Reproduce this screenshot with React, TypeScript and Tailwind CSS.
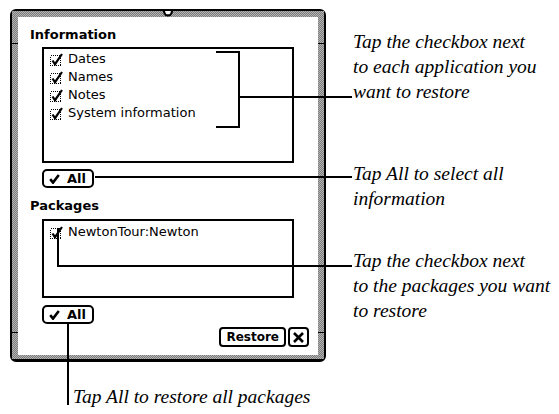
import React from "react";

const ui = { fontFamily: '"DejaVu Sans", Verdana, sans-serif' };
const serif = { fontFamily: '"Liberation Serif", "Times New Roman", serif' };

function CheckBox() {
  return (
    <svg width="15" height="15" viewBox="0 0 15 15" className="shrink-0" shapeRendering="crispEdges">
      <rect x="0.5" y="3.5" width="10" height="10" fill="none" stroke="#000" strokeWidth="1" strokeDasharray="1 1" />
      <path d="M2.5 8.5 L5 12.2 L12 2" fill="none" stroke="#000" strokeWidth="2.2" shapeRendering="auto" />
    </svg>
  );
}

function Row({ label }: { label: string }) {
  return (
    <div className="flex h-[18px] items-center gap-[3px] text-[13px] leading-[18px] text-black">
      <CheckBox />
      <span>{label}</span>
    </div>
  );
}

function AllButton() {
  return (
    <div className="flex h-[19px] w-[52px] items-center gap-[7px] rounded-[5px] border-2 border-black bg-white pl-[5px] text-[13px] font-bold leading-none">
      <svg width="11" height="10" viewBox="0 0 11 10">
        <path d="M1.2 5.2 L4 8.6 L9.8 1" fill="none" stroke="#000" strokeWidth="2.6" />
      </svg>
      <span>All</span>
    </div>
  );
}

export default function App() {
  return (
    <div className="relative h-[414px] w-[559px] overflow-hidden bg-white text-black">
      <div className="flex">
        {/* Newton slip */}
        <div
          className="relative ml-[10px] mt-[9px] h-[353px] w-[316px] shrink-0 rounded-[6px] border-2 border-b-[3px] border-black bg-[#999999] p-[6px] pb-[4px]"
          style={ui}
        >
          {/* dithered gray band */}
          <svg className="absolute inset-0 h-full w-full" shapeRendering="crispEdges">
            <defs>
              <pattern id="dither" width="2" height="2" patternUnits="userSpaceOnUse">
                <rect width="2" height="2" fill="#b4b4b4" />
                <rect width="1" height="1" fill="#7c7c7c" />
                <rect x="1" y="1" width="1" height="1" fill="#7c7c7c" />
              </pattern>
            </defs>
            <rect width="100%" height="100%" fill="url(#dither)" />
          </svg>
          <svg
            className="absolute left-1/2 top-[-2px] z-20 -translate-x-1/2"
            width="12"
            height="8"
            viewBox="0 0 12 8"
          >
            <path d="M0 0 H12 L10.2 5 Q9 7.5 6 7.5 Q3 7.5 1.8 5 Z" fill="#000" />
            <path d="M3 2 H9 L8.2 4.4 Q7.6 5.3 6 5.3 Q4.4 5.3 3.8 4.4 Z" fill="#fff" />
          </svg>
          <div className="relative flex h-full flex-col bg-white pb-[8px] pl-[12px] pr-[9px] pt-[10px]">
            <div className="text-[13px] font-bold leading-[16px]">Information</div>
            <div className="ml-[12px] mt-[4px] h-[116px] w-[252px] border-2 border-black pl-[6px] pt-[1px]">
              <Row label="Dates" />
              <Row label="Names" />
              <Row label="Notes" />
              <Row label="System information" />
            </div>
            <div className="ml-[12px] mt-[6px]">
              <AllButton />
            </div>
            <div className="mt-[10px] text-[13px] font-bold leading-[16px]">Packages</div>
            <div className="ml-[12px] mt-[5px] h-[79px] w-[252px] border-2 border-black pl-[6px] pt-[2px]">
              <Row label="NewtonTour:Newton" />
            </div>
            <div className="ml-[12px] mt-[7px] flex h-[42px] items-start justify-between">
              <AllButton />
              <div className="flex gap-[2px] self-end">
                <div className="flex h-[20px] items-center rounded-[4px] border-2 border-black px-[5px] text-[12px] font-bold leading-none">
                  Restore
                </div>
                <div className="flex h-[20px] w-[21px] items-center justify-center rounded-[4px] border-2 border-black">
                  <svg width="11" height="11" viewBox="0 0 11 11">
                    <path d="M1 1 L10 10 M10 1 L1 10" stroke="#000" strokeWidth="2.6" />
                  </svg>
                </div>
              </div>
            </div>
          </div>
        </div>

        {/* annotations on the right */}
        <div className="ml-[27px] flex flex-col pt-[29px] text-[19.5px] italic leading-[25px]" style={serif}>
          <div>
            Tap the checkbox next
            <br />
            to each application you
            <br />
            want to restore
          </div>
          <div className="mt-[57px]">
            Tap All to select all
            <br />
            information
          </div>
          <div className="mt-[37px] whitespace-nowrap">
            Tap the checkbox next
            <br />
            to the packages you want
            <br />
            to restore
          </div>
        </div>
      </div>

      <div className="ml-[73px] mt-[22px] text-[19.5px] italic leading-[25px]" style={serif}>
        Tap All to restore all packages
      </div>

      {/* callout lines */}
      <svg className="pointer-events-none absolute left-0 top-0" width="559" height="414" viewBox="0 0 559 414">
        <g stroke="#000" fill="none" strokeWidth="2" shapeRendering="crispEdges">
          <path d="M216 52 H239 V127 H216" />
          <path d="M239 97 H352" />
          <path d="M95 177 H352" />
          <path d="M58 228 V266 H352" />
          <path d="M68 324 V405" />
        </g>
        <g stroke="#000" strokeWidth="1" shapeRendering="crispEdges">
          <path d="M10 43.5 H18 M318 43.5 H326 M10 332.5 H18 M318 332.5 H326" />
        </g>
      </svg>
    </div>
  );
}
